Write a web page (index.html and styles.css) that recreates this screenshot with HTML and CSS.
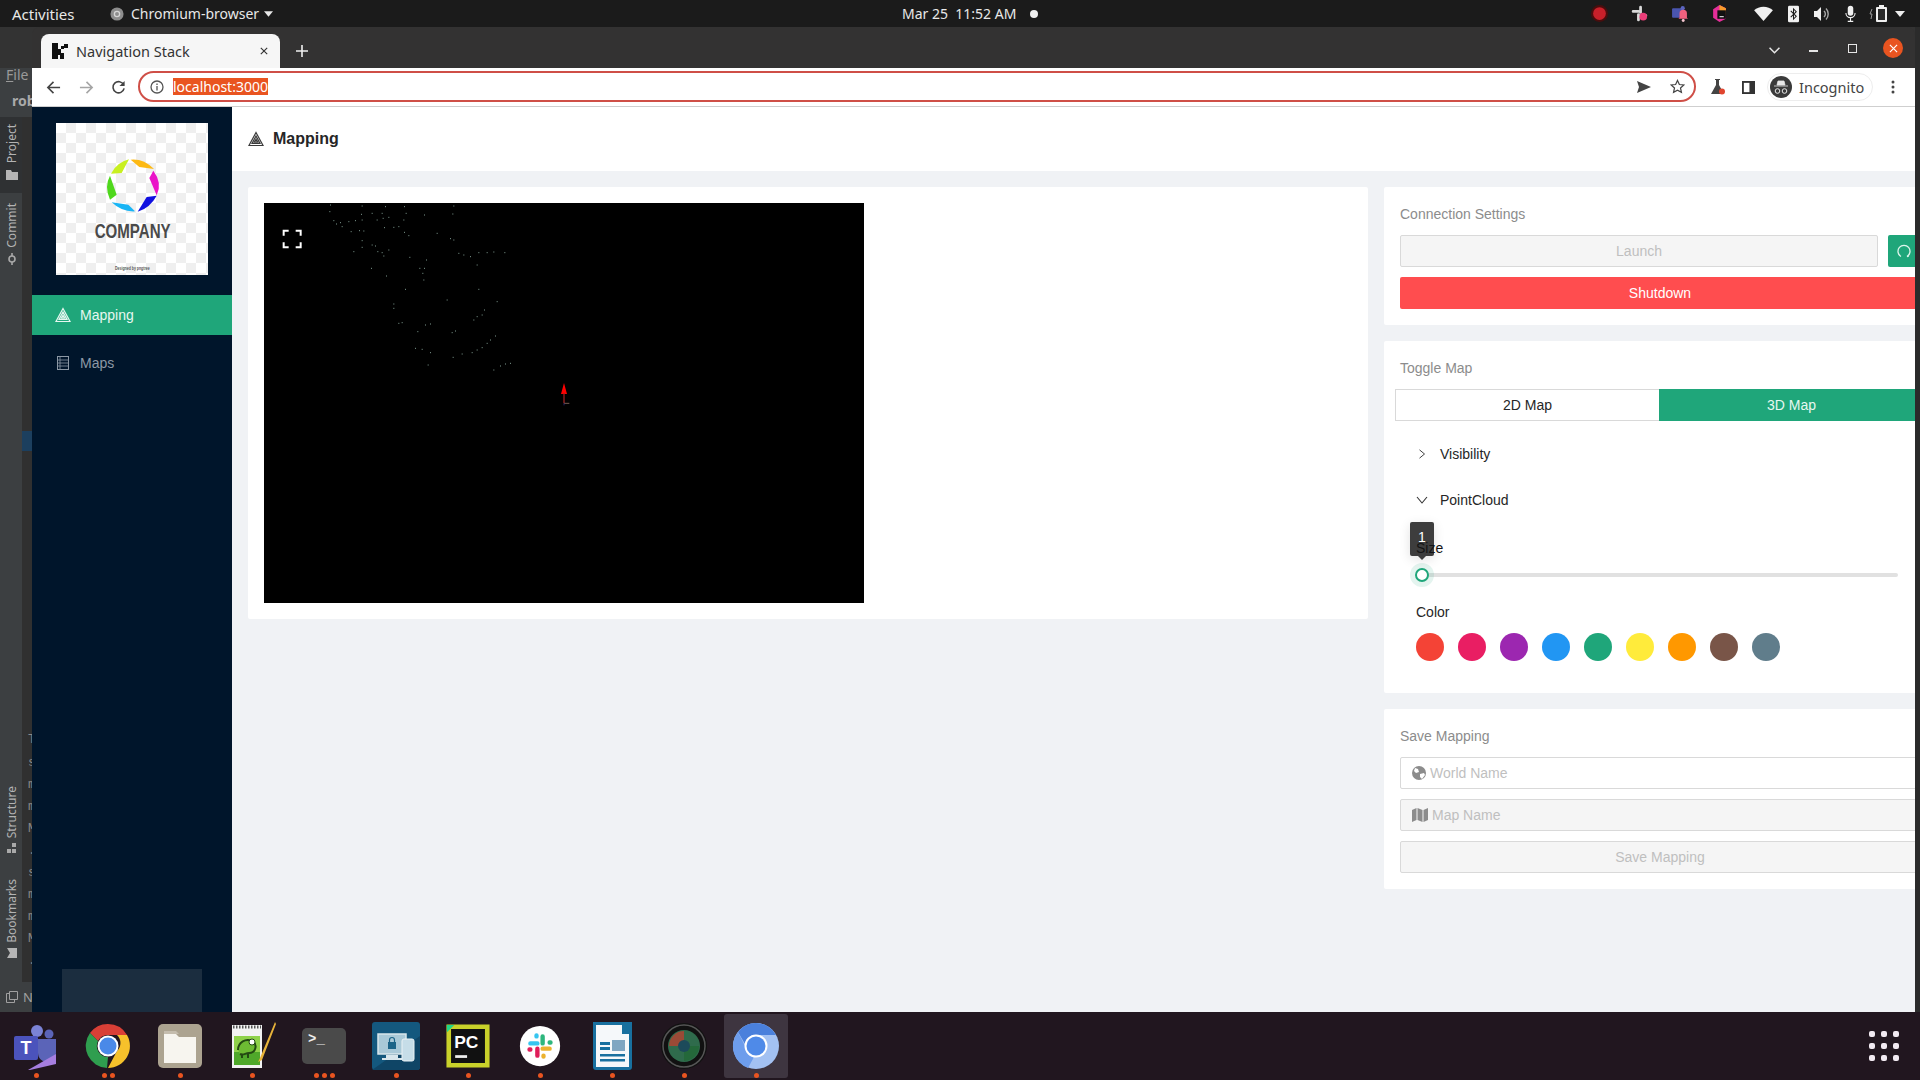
FILE: index.html
```html
<!DOCTYPE html>
<html lang="en">
<head>
<meta charset="utf-8">
<title>Navigation Stack</title>
<link rel="stylesheet" href="styles.css">
</head>
<body>
<header class="topbar">
  <span class="activities">Activities</span>
  <svg class="app-glyph" viewBox="0 0 16 16"><circle cx="8" cy="8" r="7.5" fill="#8d8d8d"/><circle cx="8" cy="8" r="3" fill="none" stroke="#d6d6d6" stroke-width="1.5"/></svg>
  <span class="app-name">Chromium-browser</span>
  <svg class="caret" viewBox="0 0 10 6"><path d="M0 0h10L5 6z" fill="#e8e8e8"/></svg>
  <span class="clock">Mar 25&nbsp; 11:52 AM</span>
  <span class="clock-dot"></span>
  <div class="tray">
    <svg class="t-a" viewBox="0 0 16 16"><circle cx="8" cy="8" r="8" fill="#4a0d0d"/><circle cx="8" cy="8" r="6" fill="#c8202a"/></svg>
    <svg class="t-a" viewBox="0 0 16 16"><path d="M2 6h5M9 2v5M14 10H9M7 14V9" stroke="#d9d9d9" stroke-width="2.6" stroke-linecap="round"/><circle cx="11.5" cy="11" r="3.6" fill="#ea3d78"/></svg>
    <svg class="t-a" viewBox="0 0 16 16"><rect x="1" y="3" width="9" height="9" rx="1" fill="#4a55b0"/><circle cx="11" cy="3" r="2" fill="#5b65c0"/><path d="M8 8a3.5 3.5 0 0 1 7 0v4l1 1H7l1-1z" fill="#f0617e"/><circle cx="11.5" cy="14.5" r="1.4" fill="#f6c6d0"/></svg>
    <svg class="t-a" viewBox="0 0 16 16"><path d="M8 0l6 3v10l-6 3-6-4V4z" fill="#e62e9a"/><path d="M8 0l6 3v6H8z" fill="#f89b2a"/><rect x="6" y="5" width="8" height="8" fill="#111"/><rect x="8" y="10.5" width="4" height="1" fill="#eee"/></svg>
    <svg class="t-wifi" viewBox="0 0 20 16"><path d="M0 4.5C5-.5 15-.5 20 4.5L10 16z" fill="#f0f0f0"/></svg>
    <svg class="t-bt" viewBox="0 0 12 18"><rect width="12" height="18" rx="1.5" fill="#f0f0f0"/><path d="M3 5.5l6 6-3 3v-11l3 3-6 6" fill="none" stroke="#1a1a1a" stroke-width="1.1"/></svg>
    <svg class="t-vol" viewBox="0 0 16 16"><path d="M0 5h3l4-4v14l-4-4H0z" fill="#f0f0f0"/><path d="M10 5a4 4 0 0 1 0 6M12 2.5a8 8 0 0 1 0 11" fill="none" stroke="#a8a8a8" stroke-width="1.4"/></svg>
    <svg class="t-mic" viewBox="0 0 12 18"><rect x="3" y="0" width="6" height="11" rx="3" fill="#f0f0f0"/><path d="M1 8a5 5 0 0 0 10 0M6 13v4M3 17h6" fill="none" stroke="#f0f0f0" stroke-width="1.2"/></svg>
    <svg class="t-bat" viewBox="0 0 20 18"><rect x="7" y="2" width="11" height="15" rx="1" fill="#f0f0f0"/><rect x="10" y="0" width="5" height="2" fill="#f0f0f0"/><rect x="9" y="4" width="7" height="11" fill="#2a2a2a"/><path d="M3 4L1 9h2l-1 5" fill="none" stroke="#999" stroke-width="1"/></svg>
    <svg class="t-caret" viewBox="0 0 10 6"><path d="M0 0h10L5 6z" fill="#eee"/></svg>
  </div>
</header>

<div class="desk">
  <aside class="ide">
    <div class="ide-menu">
      <span class="ide-file"><u>F</u>ile</span>
      <span class="ide-rob">rob</span>
    </div>
    <div class="ide-body">
      <div class="ide-stripe">
        <div class="v-tab v-tab-on"><span class="v-label">Project</span><svg class="v-icon" viewBox="0 0 12 12"><path d="M0 2h5l1 2h6v8H0z" fill="#b5b5b5"/></svg></div>
        <div class="v-tab v-commit"><span class="v-label">Commit</span><svg class="v-icon" viewBox="0 0 12 12"><circle cx="6" cy="6" r="3" fill="none" stroke="#a9a9a9" stroke-width="1.6"/><path d="M6 0v3M6 9v3" stroke="#a9a9a9" stroke-width="1.6"/></svg></div>
        <div class="v-tab v-structure"><span class="v-label">Structure</span><svg class="v-icon" viewBox="0 0 12 12"><path d="M6 0h4v4H6zM1 6h4v4H1zM6 6h4v4H6z" fill="#a9a9a9"/></svg></div>
        <div class="v-tab v-bookmarks"><span class="v-label">Bookmarks</span><svg class="v-icon" viewBox="0 0 12 12"><path d="M0 1h10v10l-5-3-5 3z" fill="#b5b5b5" transform="rotate(90 6 6)"/></svg></div>
      </div>
      <div class="ide-code">
        <span class="code-mark"></span>
        <span class="code-t">T</span>
        <div class="code-lines"><span>s</span><span>m</span><span>m</span><span>M</span><span>.</span><span>s</span><span>m</span><span>m</span><span>M</span><span>.</span></div>
      </div>
    </div>
    <div class="ide-foot">
      <svg class="ide-foot-icon" viewBox="0 0 12 12"><path d="M3.500.5h8v8h-8zM3.500 2.500H.5v9h8V8.500" fill="none" stroke="#a0a0a0"/></svg>
      <span class="ide-foot-n">N</span>
    </div>
  </aside>

  <div class="window">
    <div class="tabstrip">
      <div class="tab">
        <svg class="favicon" viewBox="0 0 16 16"><path d="M0 0h6v6h3V3h3v3H9v4h3v6H8v-4H6v4H0z" fill="#111"/><rect x="12" y="1" width="4" height="4" fill="#111"/></svg>
        <span class="tab-title">Navigation Stack</span>
        <svg class="tab-close" viewBox="0 0 10 10"><path d="M1 1l8 8M9 1l-8 8" stroke="#333" stroke-width="1.4"/></svg>
      </div>
      <svg class="tab-new" viewBox="0 0 12 12"><path d="M6 0v12M0 6h12" stroke="#f0f0f0" stroke-width="1.6"/></svg>
      <div class="win-ctrls">
        <svg class="wc-chev" viewBox="0 0 10 6"><path d="M.5.500l4.500 4.500 4.500-4.500" fill="none" stroke="#e6e6e6" stroke-width="1.4"/></svg>
        <span class="wc-min"></span>
        <span class="wc-max"></span>
        <span class="wc-close"><svg viewBox="0 0 10 10"><path d="M1 1l8 8M9 1l-8 8" stroke="#fff" stroke-width="1.3"/></svg></span>
      </div>
    </div>

    <div class="toolbar">
      <svg class="tb-btn" viewBox="0 0 16 16"><path d="M15 8H2M8 2L2 8l6 6" fill="none" stroke="#444" stroke-width="1.700"/></svg>
      <svg class="tb-btn" viewBox="0 0 16 16"><path d="M1 8h13M8 2l6 6-6 6" fill="none" stroke="#a5a5a5" stroke-width="1.700"/></svg>
      <svg class="tb-btn tb-reload" viewBox="0 0 16 16"><path d="M13.500 5A6 6 0 1 0 14 9" fill="none" stroke="#444" stroke-width="1.700"/><path d="M14.500 1v5.500H9z" fill="#444"/></svg>
      <div class="omnibox">
        <svg class="omni-info" viewBox="0 0 14 14"><circle cx="7" cy="7" r="6" fill="none" stroke="#555" stroke-width="1.300"/><path d="M7 6v4.500M7 3.500v1.500" stroke="#555" stroke-width="1.300"/></svg>
        <span class="omni-url">localhost:3000</span>
        <svg class="omni-send" viewBox="0 0 14 12"><path d="M0 0l14 6-14 6 2-6z" fill="#444"/></svg>
        <svg class="omni-star" viewBox="0 0 16 16"><path d="M8 1.500l2 4.400 4.800.500-3.600 3.200 1 4.700L8 12l-4.200 2.300 1-4.700L1.200 6.400 6 5.900z" fill="none" stroke="#444" stroke-width="1.300"/></svg>
      </div>
      <svg class="tb-flask" viewBox="0 0 14 16"><path d="M4 0h5v1H8v5l5 9H0l5-9V1H4z" fill="#444"/><circle cx="11" cy="12.500" r="3" fill="#e0452f"/></svg>
      <svg class="tb-panel" viewBox="0 0 14 14"><rect x="0" y="0" width="14" height="14" fill="#333"/><rect x="2" y="2" width="6" height="10" fill="#fff"/></svg>
      <div class="incognito">
        <svg class="inc-avatar" viewBox="0 0 22 22"><circle cx="11" cy="11" r="11" fill="#3a3a3a"/><path d="M4 10h14M7 9l1-4h6l1 4z" stroke="#e8e8e8" fill="#e8e8e8" stroke-width=".8"/><circle cx="7.500" cy="15" r="2.300" fill="none" stroke="#e8e8e8"/><circle cx="14.500" cy="15" r="2.300" fill="none" stroke="#e8e8e8"/></svg>
        <span class="inc-text">Incognito</span>
      </div>
      <svg class="tb-menu" viewBox="0 0 4 14"><circle cx="2" cy="2" r="1.500" fill="#444"/><circle cx="2" cy="7" r="1.500" fill="#444"/><circle cx="2" cy="12" r="1.500" fill="#444"/></svg>
    </div>

    <div class="app">
      <nav class="sidebar">
        <div class="logo">
          <svg class="logo-art" viewBox="168 40 456 456">
            <path d="M392 150Q430 146 462 178L418 172Z" fill="#fdb913"/>
            <path d="M460 183Q488 220 470 257L448 205Z" fill="#ea14c8"/>
            <path d="M470 258Q450 295 413 306L440 262Z" fill="#1010e0"/>
            <path d="M405 305Q365 307 335 278L385 285Z" fill="#19b5f5"/>
            <path d="M330 270Q312 230 330 198L350 255Z" fill="#4fd81c"/>
            <path d="M333 192Q350 158 387 149L365 190Z" fill="#c8f020"/>
            <text class="logo-word" x="398" y="384" text-anchor="middle" textLength="228" lengthAdjust="spacingAndGlyphs">COMPANY</text>
            <text class="logo-small" x="397" y="480" text-anchor="middle" textLength="104" lengthAdjust="spacingAndGlyphs">Designed by pngtree</text>
          </svg>
        </div>
        <a class="nav-item nav-on">
          <svg class="tri-icon" viewBox="0 0 16 16"><path d="M8 1.500L15 14.500H1z M8 5L4 12.500h8z M8 8.200l-1.700 3h3.400z" fill="none" stroke="currentColor" stroke-width="1.200"/></svg>
          <span>Mapping</span>
        </a>
        <a class="nav-item">
          <svg class="maps-icon" viewBox="0 0 14 16"><rect x="1.500" y="1.500" width="11" height="13" fill="none" stroke="currentColor"/><path d="M1.500 5h11M1.500 8h11M1.500 11h11M4 1.500v13" fill="none" stroke="currentColor" stroke-width=".8"/></svg>
          <span>Maps</span>
        </a>
        <div class="side-foot"></div>
      </nav>

      <main class="page">
        <div class="page-head">
          <svg class="tri-icon" viewBox="0 0 16 16"><path d="M8 1.500L15 14.500H1z M8 5L4 12.500h8z M8 8.200l-1.700 3h3.400z" fill="none" stroke="currentColor" stroke-width="1.200"/></svg>
          <h1>Mapping</h1>
        </div>
        <div class="page-grid">
          <section class="card map-card">
            <div class="viewer">
              <svg class="viewer-svg" viewBox="12 9 1800 1200">
                <path class="cloud" d="M210 15h3M208 35h3M305 18h3M375 20h3M432 20h3M580 18h3M303 43h3M335 40h3M365 40h3M492 45h3M577 42h3M220 62h3M240 68h3M228 72h3M265 65h3M285 62h3M305 60h3M350 60h3M368 55h3M385 52h3M430 60h3M437 40h3M245 80h3M272 95h3M297 92h3M310 93h3M372 83h3M400 82h3M415 80h3M432 97h3M445 107h3M530 100h3M570 116h3M580 120h3M305 122h3M335 135h3M345 138h3M305 142h3M280 155h3M352 155h3M365 158h3M385 150h3M370 168h3M595 160h3M610 165h3M630 170h3M655 158h3M680 158h3M700 156h3M733 158h3M448 172h3M498 180h3M650 195h3M333 205h3M478 205h3M492 205h3M378 228h3M487 220h3M490 240h3M435 268h3M655 268h3M560 300h3M710 305h3M400 312h3M400 325h3M672 330h3M665 345h3M650 350h3M640 360h3M415 370h3M425 368h3M510 372h3M495 375h3M472 395h3M575 398h3M585 393h3M705 408h3M690 420h3M680 430h3M665 443h3M650 450h3M635 458h3M465 445h3M485 448h3M510 458h3M605 462h3M578 472h3M503 495h3M750 490h3M735 492h3M720 498h3M700 510h3"/>
                <path d="M912 549l9 33h-18z" fill="#ff0000"/>
                <path d="M912 580v30" stroke="#9a2020" stroke-width="4"/>
                <path d="M912 610h16" stroke="#b08a7a" stroke-width="2"/>
                <path d="M912 610v6" stroke="#20206a" stroke-width="3"/>
                <path class="fs-icon" d="M86 92H71v15M107 92h15v15M71 127v15h15M122 127v15h-15"/>
              </svg>
            </div>
          </section>

          <div class="side-col">
            <section class="card panel">
              <h2 class="panel-title">Connection Settings</h2>
              <div class="launch-row">
                <button class="btn btn-off btn-grow">Launch</button>
                <button class="btn btn-green btn-icon"><svg viewBox="0 0 14 14"><path d="M4 12.500A6 6 0 1 1 10 12.500" fill="none" stroke="#dff5ec" stroke-width="1.300"/><path d="M10 12.500l1.800-.3" stroke="#dff5ec" stroke-width="1.300"/></svg></button>
              </div>
              <button class="btn btn-red">Shutdown</button>
            </section>

            <section class="card panel">
              <h2 class="panel-title">Toggle Map</h2>
              <div class="seg">
                <span class="seg-item">2D Map</span>
                <span class="seg-item seg-on">3D Map</span>
              </div>
              <div class="acc-row">
                <svg class="chev-r" viewBox="0 0 8 12"><path d="M1 1l6 5-6 5" fill="none" stroke="#333" stroke-width="1.100"/></svg>
                <span>Visibility</span>
              </div>
              <div class="acc-row">
                <svg class="chev-d" viewBox="0 0 12 8"><path d="M1 1l5 6 5-6" fill="none" stroke="#333" stroke-width="1.100"/></svg>
                <span>PointCloud</span>
              </div>
              <div class="acc-body">
                <div class="size-label"><span class="size-text">Size</span>
                  <div class="tooltip"><span class="tooltip-num">1</span></div>
                </div>
                <div class="slider">
                  <div class="slider-rail"></div>
                  <div class="slider-handle"></div>
                </div>
                <div class="color-label">Color</div>
                <div class="swatches">
                  <span class="sw sw-red"></span><span class="sw sw-pink"></span><span class="sw sw-purple"></span><span class="sw sw-blue"></span><span class="sw sw-green"></span><span class="sw sw-yellow"></span><span class="sw sw-orange"></span><span class="sw sw-brown"></span><span class="sw sw-slate"></span>
                </div>
              </div>
            </section>

            <section class="card panel">
              <h2 class="panel-title">Save Mapping</h2>
              <div class="field">
                <svg class="field-globe" viewBox="0 0 14 14"><circle cx="7" cy="7" r="7" fill="#8c8c8c"/><path d="M3 2l3 1 1 3-3 1-2-2zM8 8l4-1 1 2-3 4-2-2z" fill="#fff"/></svg>
                <span>World Name</span>
              </div>
              <div class="field field-off">
                <svg class="field-map" viewBox="0 0 16 14"><path d="M0 2l4.500-2v12L0 14zM5.500 0l5 2v12l-5-2zM11.500 2L16 0v12l-4.500 2z" fill="#8c8c8c"/></svg>
                <span>Map Name</span>
              </div>
              <button class="btn btn-off btn-save">Save Mapping</button>
            </section>
          </div>
        </div>
      </main>
    </div>
  </div>
  <div class="desk-edge"></div>
</div>

<footer class="dock">
  <div class="dock-item">
    <svg class="dock-icon" viewBox="0 0 48 48"><circle cx="25" cy="9" r="6" fill="#7b83d6"/><circle cx="37" cy="12" r="4.500" fill="#5b64b8"/><path d="M26 17h18v14c0 6-5 9-9 9s-9-3-9-9z" fill="#5b64b8"/><rect x="2" y="14" width="24" height="24" rx="2" fill="#4b53bc"/><text class="d-t" x="14" y="32" text-anchor="middle">T</text><path d="M16 48l28-16v10l-26 6z" fill="#a67ee0"/></svg>
    <div class="dots"><i></i></div>
  </div>
  <div class="dock-item">
    <svg class="dock-icon" viewBox="0 0 48 48"><path d="M24 2a22 22 0 0 1 19 11H24a11 11 0 0 0-10 6L6 11A22 22 0 0 1 24 2z" fill="#d93f36"/><path d="M43 13a22 22 0 0 1-19 33l9-17a11 11 0 0 0 0-16z" fill="#f6c12b"/><path d="M6 11l8 8a11 11 0 0 0 10 16l-1 11A22 22 0 0 1 6 11z" fill="#2f9e4f"/><circle cx="24" cy="24" r="10.500" fill="#fff"/><circle cx="24" cy="24" r="8.500" fill="#4a89e8"/></svg>
    <div class="dots"><i></i><i></i></div>
  </div>
  <div class="dock-item">
    <svg class="dock-icon" viewBox="0 0 48 48"><rect x="2" y="2" width="44" height="44" rx="5" fill="#aca390"/><path d="M8 12h12l3 3h17v26H8z" fill="#f7f5ef"/><path d="M8 9h12l3 3h-15z" fill="#c5bdae"/></svg>
    <div class="dots"><i></i></div>
  </div>
  <div class="dock-item">
    <svg class="dock-icon" viewBox="0 0 48 48"><path d="M4 3h30v43H4z" fill="#f2f2f2"/><path d="M5 5h28" stroke="#555" stroke-width="3" stroke-dasharray="1.500 1.500"/><path d="M6 14h26v29H6z" fill="#8fd24a"/><path d="M6 30h26v13H6z" fill="#4fa82a"/><path d="M10 28c0-8 8-12 14-9 6 3 4 12-3 12-4 0-5 3-9 1" fill="#6dbb33" stroke="#234a12" stroke-width="2"/><circle cx="24" cy="20" r="3" fill="#fff" stroke="#234a12"/><path d="M14 32v4M20 32v4" stroke="#234a12" stroke-width="2"/><path d="M47 0L32 36l-2 4 4-2L48 2z" fill="#e8b33a"/></svg>
    <div class="dots"><i></i></div>
  </div>
  <div class="dock-item">
    <svg class="dock-icon" viewBox="0 0 48 48"><rect x="2" y="6" width="44" height="36" rx="5" fill="#4a4a4a"/><text class="d-term" x="8" y="21">&gt;_</text></svg>
    <div class="dots"><i></i><i></i><i></i></div>
  </div>
  <div class="dock-item">
    <svg class="dock-icon" viewBox="0 0 48 48"><rect width="48" height="48" rx="3" fill="#14587e"/><path d="M0 48L48 14v31a3 3 0 0 1-3 3z" fill="#0f4566"/><rect x="6" y="12" width="28" height="20" fill="#a9c9d8" stroke="#d8e6ec" stroke-width="1.500"/><rect x="14" y="33" width="12" height="3" fill="#d8e6ec"/><rect x="10" y="36" width="20" height="2" fill="#d8e6ec"/><rect x="30" y="17" width="12" height="22" rx="2" fill="#c6dde8" stroke="#eaf2f5"/><rect x="16" y="20" width="8" height="7" fill="#1c6488"/><path d="M17.500 20v-2a2.500 2.500 0 0 1 5 0v2" fill="none" stroke="#1c6488" stroke-width="1.200"/></svg>
    <div class="dots"><i></i></div>
  </div>
  <div class="dock-item">
    <svg class="dock-icon d-pc" viewBox="0 0 48 48"><path d="M3 3h42v42H3z" fill="#111"/><path d="M3 3h42v42H3z" fill="none" stroke="#c9d12a" stroke-width="5"/><path d="M1 1h8L1 9z" fill="#21d789"/><text class="d-pc-text" x="9" y="26">PC</text><rect x="10" y="34" width="13" height="3" fill="#eee"/></svg>
    <div class="dots"><i></i></div>
  </div>
  <div class="dock-item">
    <svg class="dock-icon d-slack" viewBox="0 0 48 48"><circle cx="24" cy="24" r="23" fill="#fff"/><path d="M13 21h8M20 12v1" stroke="#36c5f0" stroke-width="5" stroke-linecap="round"/><path d="M27 13v8M35 20h1" stroke="#2eb67d" stroke-width="5" stroke-linecap="round"/><path d="M27 27h8M28 35v1" stroke="#ecb22e" stroke-width="5" stroke-linecap="round"/><path d="M21 27v8M13 28h-1" stroke="#e01e5a" stroke-width="5" stroke-linecap="round"/></svg>
    <div class="dots"><i></i></div>
  </div>
  <div class="dock-item">
    <svg class="dock-icon" viewBox="0 0 48 48"><path d="M5 0h30l9 9v36a3 3 0 0 1-3 3H8a3 3 0 0 1-3-3z" fill="#18709f"/><path d="M8 3h26v9h7v33H8z" fill="#f5f8fa"/><path d="M33 0l11 10V0z" fill="#18709f"/><rect x="12" y="20" width="10" height="3" fill="#18709f"/><rect x="12" y="25" width="10" height="3" fill="#18709f"/><rect x="12" y="32" width="25" height="2.500" fill="#18709f"/><rect x="12" y="37" width="25" height="2.500" fill="#18709f"/><rect x="24" y="18" width="13" height="11" fill="#7fa6c2"/></svg>
    <div class="dots"><i></i></div>
  </div>
  <div class="dock-item">
    <svg class="dock-icon" viewBox="0 0 48 48"><circle cx="24" cy="24" r="23" fill="#111"/><circle cx="24" cy="24" r="21" fill="none" stroke="#555" stroke-width="1.500"/><circle cx="24" cy="24" r="16" fill="#2f6b4c"/><path d="M9 24a15 15 0 0 1 15-15v15z" fill="#9a4a36"/><path d="M24 39a15 15 0 0 0 15-15H24z" fill="#24683a"/><circle cx="24" cy="24" r="6" fill="#1c4a5a"/></svg>
    <div class="dots"><i></i></div>
  </div>
  <div class="dock-item dock-active">
    <svg class="dock-icon" viewBox="0 0 48 48"><circle cx="24" cy="24" r="23" fill="#a3c1f2"/><path d="M24 1a23 23 0 0 1 20 12H24a11 11 0 0 0-11 9L6 10A23 23 0 0 1 24 1z" fill="#4a80dc"/><path d="M13 24a11 11 0 0 0 9 11l-6 11A23 23 0 0 1 6 10z" fill="#6d9dec"/><circle cx="24" cy="24" r="11.500" fill="#fff"/><circle cx="24" cy="24" r="9.500" fill="#4f8ae8"/></svg>
    <div class="dots"><i></i></div>
  </div>
  <div class="app-grid">
    <i></i><i></i><i></i><i></i><i></i><i></i><i></i><i></i><i></i>
  </div>
</footer>
</body>
</html>
```

FILE: styles.css
```css
* { box-sizing: border-box; }
html, body { margin: 0; height: 1080px; width: 1920px; overflow: hidden; }
body { display: flex; flex-direction: column; font-family: "Liberation Sans", Arial, sans-serif; font-size: 14px; color: #262626; background: #21161f; }
h1, h2 { margin: 0; }
svg { display: block; flex: none; }

/* GNOME top bar */
.topbar { height: 27px; flex: none; background: #1b1b1b; color: #e8e8e8; display: flex; align-items: center; font-family: "Noto Sans", sans-serif; font-size: 14px; }
.activities { margin-left: 12px; width: 98px; font-size: 15px; white-space: nowrap; }
.app-glyph { width: 14px; height: 14px; }
.app-name { margin-left: 7px; width: 129px; white-space: nowrap; }
.caret { width: 9px; height: 6px; margin-left: 4px; }
.clock { margin-left: 629px; width: 114px; white-space: nowrap; font-size: 14px; }
.clock-dot { width: 8px; height: 8px; border-radius: 50%; background: #f0f0f0; margin-left: 14px; }
.tray { margin-left: auto; display: flex; align-items: center; padding-right: 15px; }
.t-a { width: 17px; height: 17px; margin-right: 23px; }
.t-a:nth-child(4) { margin-right: 26px; }
.t-wifi { width: 19px; height: 15px; margin-right: 15px; }
.t-bt { width: 11px; height: 18px; margin-right: 15px; }
.t-vol { width: 16px; height: 16px; margin-right: 15px; }
.t-mic { width: 11px; height: 18px; margin-right: 13px; }
.t-bat { width: 20px; height: 18px; margin-right: 6px; }
.t-caret { width: 10px; height: 6px; }

/* desktop row */
.desk { height: 985px; flex: none; display: flex; background: #333; }
.desk-edge { width: 5px; background: #2b2b2b; flex: none; }

/* IDE peeking behind the browser */
.ide { width: 32px; flex: none; display: flex; flex-direction: column; background: #3c3f41; overflow: hidden; color: #a9b0b3; }
.ide-menu { height: 90px; flex: none; background: linear-gradient(#333 0 41px, #3c3f41 41px); padding-top: 39px; white-space: nowrap; }
.ide-file { display: block; padding-left: 6px; font-family: "Noto Sans", sans-serif; font-size: 14px; line-height: 18px; color: #9a9a9a; }
.ide-rob { display: block; padding-left: 12px; margin-top: 8px; font-family: "Noto Sans", sans-serif; font-weight: 700; font-size: 14px; line-height: 18px; color: #a9a9a9; }
.ide-body { flex: 1; display: flex; min-height: 0; }
.ide-stripe { width: 22px; flex: none; background: #3c3f41; }
.v-tab { display: flex; flex-direction: column; align-items: center; gap: 5px; width: 24px; }
.v-tab-on { background: #2f3133; padding-top: 7px; height: 76px; width: 22px; padding-left: 1px; }
.v-commit { margin-top: 10px; }
.v-structure { margin-top: 521px; }
.v-bookmarks { margin-top: 24px; }
.v-label { writing-mode: vertical-rl; transform: rotate(180deg); font-family: "Noto Sans", sans-serif; font-size: 12px; line-height: 22px; color: #b3b3b3; }
.v-icon { width: 12px; height: 12px; }
.ide-code { flex: 1; background: #303030; font-family: "Liberation Mono", monospace; font-size: 13px; color: #888; white-space: nowrap; overflow: hidden; padding-top: 314px; }
.code-mark { display: block; width: 10px; height: 20px; background: #1c3f5e; }
.code-t { display: block; margin-top: 281px; height: 20px; line-height: 16px; padding-left: 6px; }
.code-lines span { display: block; height: 22px; line-height: 22px; padding-left: 6px; }
.ide-foot { height: 30px; flex: none; display: flex; align-items: center; background: #3c3f41; padding-left: 6px; gap: 5px; }
.ide-foot-icon { width: 12px; height: 12px; }
.ide-foot-n { font-family: "Noto Sans", sans-serif; font-size: 13px; color: #a0a0a0; }

/* Chromium window */
.window { flex: 1; min-width: 0; display: flex; flex-direction: column; }
.tabstrip { height: 41px; flex: none; display: flex; background: #333232; padding: 7px 0 0 9px; border-radius: 8px 8px 0 0; position: relative; }
.tab { width: 239px; height: 34px; background: #f6f6f6; border-radius: 8px 8px 0 0; display: flex; align-items: center; padding: 0 12px 0 11px; color: #333; font-family: "Noto Sans", sans-serif; font-size: 14.500px; }
.favicon { width: 16px; height: 16px; }
.tab-title { margin-left: 8px; white-space: nowrap; }
.tab-close { width: 8px; height: 8px; margin-left: auto; }
.tab-new { width: 12px; height: 12px; margin: 11px 0 0 16px; }
.win-ctrls { margin-left: auto; display: flex; align-items: center; height: 26px; margin-top: 1px; }
.wc-chev { width: 11px; height: 7px; margin-top: 5px; }
.wc-min { width: 9px; height: 1.500px; background: #e6e6e6; margin: 6px 0 0 29px; }
.wc-max { width: 9px; height: 9px; border: 1px solid #e6e6e6; margin-left: 30px; }
.wc-close { width: 20px; height: 20px; border-radius: 50%; background: #e95420; margin: 0 12px 0 26px; display: flex; align-items: center; justify-content: center; }
.wc-close svg { width: 9px; height: 9px; }

.toolbar { height: 39px; flex: none; display: flex; align-items: center; background: #fff; border-bottom: 1px solid #cfcfcf; padding-left: 14px; }
.tb-btn { width: 15px; height: 15px; margin-right: 18px; }
.tb-reload { margin-left: -1px; margin-right: 19px; }
.omnibox { width: 1558px; height: 31px; flex: none; margin-left: -7px; margin-top: -1px; border: 2px solid #cf4f47; border-radius: 16px; display: flex; align-items: center; padding-left: 10px; }
.omni-info { width: 14px; height: 14px; }
.omni-url { margin-left: 9px; background: #e95420; color: #fff; font-family: "Noto Sans", sans-serif; font-size: 14px; line-height: 17px; }
.omni-send { width: 14px; height: 12px; margin-left: auto; }
.omni-star { width: 15px; height: 15px; margin: 0 9px 0 19px; }
.tb-flask { width: 14px; height: 16px; margin-left: 15px; }
.tb-panel { width: 13px; height: 13px; margin-left: 17px; }
.incognito { width: 106px; height: 28px; margin-left: 12px; border: 1px solid #ededed; border-radius: 14px; display: flex; align-items: center; padding-left: 1px; font-family: "Noto Sans", sans-serif; font-size: 14.500px; color: #444; white-space: nowrap; }
.inc-avatar { width: 22px; height: 22px; margin-left: 1px; }
.inc-text { margin-left: 7px; }
.tb-menu { width: 4px; height: 14px; margin-left: 18px; }

/* app */
.app { flex: 1; min-height: 0; display: flex; overflow: hidden; background: #f0f2f5; }
.sidebar { width: 200px; flex: none; background: #00152b; display: flex; flex-direction: column; color: #8c98a5; }
.logo { width: 152px; height: 152px; margin: 16px auto 20px; background-color: #fff; background-image: conic-gradient(#efefef 25%, #fff 0 50%, #efefef 0 75%, #fff 0); background-size: 20px 20px; }
.logo-art { width: 152px; height: 152px; }
.logo-word { font-family: "Liberation Sans", sans-serif; font-weight: 700; font-size: 58px; fill: #4a4a4a; }
.logo-small { font-family: "Liberation Sans", sans-serif; font-weight: 700; font-size: 14px; fill: #555; }
.nav-item { height: 40px; display: flex; align-items: center; padding-left: 24px; gap: 9px; margin-bottom: 8px; }
.nav-on { background: #1fa67a; color: #e6f7f0; }
.tri-icon { width: 16px; height: 16px; }
.nav-item .tri-icon { margin-left: -1px; }
.maps-icon { width: 14px; height: 16px; margin-right: 1px; }
.side-foot { margin: auto 30px 0; height: 43px; background: #1b2d3f; }

.page { flex: 1; min-width: 0; overflow: hidden; display: flex; flex-direction: column; }
.page-head { height: 64px; flex: none; background: #fff; display: flex; align-items: center; padding-left: 16px; gap: 9px; color: #3a3a3a; }
.page-head h1 { font-size: 16px; font-weight: 700; color: #262626; }
.page-grid { display: grid; grid-template-columns: 1120px 552px; gap: 16px; padding: 16px; align-items: start; width: 1720px; }
.card { background: #fff; border-radius: 2px; }
.map-card { padding: 16px; height: 432px; }
.viewer { width: 600px; height: 400px; background: #000; }
.viewer-svg { width: 600px; height: 400px; }
.cloud { fill: none; stroke: #7f9a90; stroke-width: 3; }
.fs-icon { fill: none; stroke: #fff; stroke-width: 6; }

.side-col { display: flex; flex-direction: column; gap: 16px; }
.panel { padding: 16px; }
.panel-title { font-size: 14px; font-weight: 400; line-height: 22px; color: #8c8c8c; margin-bottom: 10px; }
.btn { display: block; height: 32px; font: inherit; border-radius: 2px; border: 1px solid transparent; padding: 0; }
.btn-off { background: #f5f5f5; border-color: #d9d9d9; color: #bfbfbf; }
.btn-grow { width: 479px; }
.launch-row { display: flex; gap: 10px; margin-bottom: 10px; }
.btn-green { background: #1fa67a; }
.btn-icon { width: 32px; display: flex; align-items: center; justify-content: center; }
.btn-icon svg { width: 14px; height: 14px; }
.btn-red { width: 520px; background: #ff4d4f; color: #fff; }
.seg { display: flex; margin: 0 -5px 0 -5px; }
.seg-item { width: 264px; height: 32px; display: flex; align-items: center; justify-content: center; border: 1px solid #d9d9d9; border-right: 0; color: #262626; }
.seg-on { background: #1fa67a; border-color: #1fa67a; color: #e6f7f0; }
.acc-row { height: 46px; display: flex; align-items: center; padding-left: 16px; }
.seg + .acc-row { margin-top: 10px; }
.acc-row span { margin-left: 12px; }
.chev-r { width: 8px; height: 10px; margin-left: 2px; margin-right: 2px; }
.chev-d { width: 12px; height: 8px; }
.acc-body { padding: 14px 0 16px 16px; }
.size-label { position: relative; line-height: 22px; height: 22px; }
.size-text { position: relative; z-index: 2; color: #141414; }
.tooltip { position: absolute; left: -6px; top: -15px; width: 24px; height: 34px; background: #3d3d3d; border-radius: 2px; z-index: 1; box-shadow: 0 3px 12px rgba(0,0,0,.12); text-align: center; color: #fff; line-height: 30px; }
.tooltip::after { content: ""; position: absolute; left: 8px; bottom: -4px; border: 4px solid transparent; border-bottom: 0; border-top-color: #3d3d3d; }
.slider { position: relative; height: 42px; width: 482px; }
.slider-rail { position: absolute; left: 0; right: 0; top: 14px; height: 4px; border-radius: 2px; background: #e1e1e1; }
.slider-handle { position: absolute; left: -1px; top: 9px; width: 14px; height: 14px; border-radius: 50%; background: #fff; border: 2px solid #1fa67a; box-shadow: 0 0 0 5px rgba(31,166,122,.12); }
.color-label { line-height: 22px; margin-bottom: 10px; }
.swatches { display: flex; gap: 14px; }
.sw { width: 28px; height: 28px; border-radius: 50%; }
.sw-red { background: #f44336; }
.sw-pink { background: #e91e63; }
.sw-purple { background: #9c27b0; }
.sw-blue { background: #2196f3; }
.sw-green { background: #1fa67a; }
.sw-yellow { background: #ffeb3b; }
.sw-orange { background: #ff9800; }
.sw-brown { background: #795548; }
.sw-slate { background: #607d8b; }
.field { height: 32px; width: 520px; border: 1px solid #d9d9d9; border-radius: 2px; display: flex; align-items: center; padding-left: 11px; gap: 4px; color: #bfbfbf; margin-bottom: 10px; }
.field-off { background: #f5f5f5; }
.field-globe { width: 14px; height: 14px; }
.field-map { width: 16px; height: 14px; }
.btn-save { width: 520px; }

/* dock */
.dock { height: 68px; flex: none; display: flex; background: #21161f; position: relative; }
.dock-item { width: 72px; height: 68px; flex: none; display: flex; flex-direction: column; align-items: center; padding-top: 10px; position: relative; }
.dock-icon { width: 48px; height: 48px; }
.d-pc { width: 44px; height: 44px; margin: 2px 0; }
.d-slack { width: 42px; height: 42px; margin: 3px 0; }
.dots { display: flex; gap: 3px; margin-top: 3px; }
.dots i { width: 5px; height: 5px; border-radius: 50%; background: #e95420; }
.dock-active::before { content: ""; position: absolute; left: 4px; right: 4px; top: 2px; bottom: 2px; background: #3e3540; border-radius: 3px; }
.dock-active > * { position: relative; }
.d-t { font: 700 18px "Liberation Sans", sans-serif; fill: #fff; }
.d-term { font: 700 14px "Liberation Mono", monospace; fill: #eee; }
.d-pc-text { font: 700 19px "Liberation Sans", sans-serif; fill: #fff; }
.app-grid { margin-left: auto; margin-right: 21px; align-self: center; display: grid; grid-template-columns: repeat(3, 6px); gap: 6px; }
.app-grid i { width: 6px; height: 6px; border-radius: 2px; background: #f1e9f1; }
```
